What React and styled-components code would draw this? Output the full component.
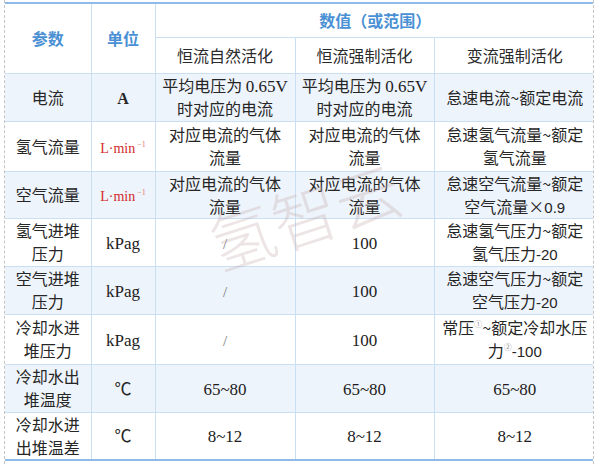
import React from "react";
import styled, { createGlobalStyle } from "styled-components";

const GlobalStyle = createGlobalStyle`
  html, body {
    margin: 0;
    padding: 0;
    background: #fff;
  }
  body {
    font-family: "Noto Sans CJK SC", "Noto Sans", sans-serif;
    color: #262626;
  }
`;

const Frame = styled.div`
  position: relative;
  width: 590px;
  height: 464px;
  margin-left: 4px;
  padding-top: 2px;
  box-sizing: border-box;
  border-left: 1px dashed #c4c4c4;
  border-right: 1px dashed #c4c4c4;
  overflow: hidden;
`;

const Sheet = styled.table`
  width: 590px;
  table-layout: fixed;
  border-collapse: collapse;
  border-top: 2px solid #8dbae6;
  border-bottom: 2px solid #8dbae6;
  font-size: 16px;
  line-height: 23px;
`;

const Row = styled.tr`
  height: ${(p) => p.$h}px;
  background: ${(p) => (p.$shade ? "#eef4fb" : "#fff")};
`;

const Cell = styled.td`
  border: 1px solid #cbdff3;
  padding: 0 3px;
  height: ${(p) => p.$h || 0}px;
  box-sizing: border-box;
  text-align: center;
  vertical-align: middle;
  white-space: nowrap;
  color: #262626;

  &:first-child {
    border-left: none;
  }
  &:last-child {
    border-right: none;
  }

  span, sup {
    line-height: 1;
  }
`;

const HeadCell = styled(Cell).attrs({ as: "th" })`
  color: #4a90d4;
  font-weight: 700;
  font-size: 16px;
`;

const SubHead = styled(Cell)`
  color: #2a2a2a;
`;

const Num = styled.span`
  font-family: "Liberation Serif", serif;
  font-size: 17px;
  color: #221c22;
`;

const Sans = styled.span`
  font-family: "Liberation Sans", sans-serif;
  font-size: 15px;
`;

const Slash = styled.span`
  font-family: "Liberation Serif", serif;
  font-size: 15px;
  color: #777;
`;

const Amp = styled.span`
  font-family: "Liberation Serif", serif;
  font-weight: 700;
  font-size: 16px;
`;

const Flow = styled.span`
  font-family: "Liberation Serif", serif;
  font-size: 14px;
  color: #d22a2a;

  sup {
    font-size: 8px;
    color: #e07a7a;
    vertical-align: 6px;
    margin-left: 2px;
  }
`;

const Deg = styled.span`
  font-size: 17px;
`;

const Note = styled.sup`
  font-size: 8px;
  color: #999;
  vertical-align: 7px;
`;

const Watermark = styled.div`
  position: absolute;
  left: 200px;
  top: 180px;
  font-size: 66px;
  line-height: 1;
  font-weight: 300;
  white-space: nowrap;
  color: rgba(190, 160, 160, 0.28);
  transform: rotate(-18deg);
  pointer-events: none;
`;

const rows = [
  {
    name: ["电流"],
    unit: "amp",
    a: ["平均电压为 ", <Num key="n">0.65V</Num>, <br key="b" />, "时对应的电流"],
    b: ["平均电压为 ", <Num key="n">0.65V</Num>, <br key="b" />, "时对应的电流"],
    c: ["怠速电流~额定电流"],
    h: 48,
    shade: true,
  },
  {
    name: ["氢气流量"],
    unit: "flow",
    a: ["对应电流的气体", <br key="b" />, "流量"],
    b: ["对应电流的气体", <br key="b" />, "流量"],
    c: ["怠速氢气流量~额定", <br key="b" />, "氢气流量"],
    h: 50,
  },
  {
    name: ["空气流量"],
    unit: "flow",
    a: ["对应电流的气体", <br key="b" />, "流量"],
    b: ["对应电流的气体", <br key="b" />, "流量"],
    c: ["怠速空气流量~额定", <br key="b" />, "空气流量×", <Sans key="s">0.9</Sans>],
    h: 47,
    shade: true,
  },
  {
    name: ["氢气进堆", <br key="b" />, "压力"],
    unit: "kPag",
    a: [<Slash key="s">/</Slash>],
    b: [<Num key="n">100</Num>],
    c: ["怠速氢气压力~额定", <br key="b" />, "氢气压力", <Sans key="s">-20</Sans>],
    h: 48,
  },
  {
    name: ["空气进堆", <br key="b" />, "压力"],
    unit: "kPag",
    a: [<Slash key="s">/</Slash>],
    b: [<Num key="n">100</Num>],
    c: ["怠速空气压力~额定", <br key="b" />, "空气压力", <Sans key="s">-20</Sans>],
    h: 48,
    shade: true,
  },
  {
    name: ["冷却水进", <br key="b" />, "堆压力"],
    unit: "kPag",
    a: [<Slash key="s">/</Slash>],
    b: [<Num key="n">100</Num>],
    c: [
      "常压",
      <Note key="n1">①</Note>,
      "~额定冷却水压",
      <br key="b" />,
      "力",
      <Note key="n2">②</Note>,
      <Sans key="s">-100</Sans>,
    ],
    h: 50,
  },
  {
    name: ["冷却水出", <br key="b" />, "堆温度"],
    unit: "deg",
    a: [<Num key="n">65~80</Num>],
    b: [<Num key="n">65~80</Num>],
    c: [<Num key="n">65~80</Num>],
    h: 48,
    shade: true,
  },
  {
    name: ["冷却水进", <br key="b" />, "出堆温差"],
    unit: "deg",
    a: [<Num key="n">8~12</Num>],
    b: [<Num key="n">8~12</Num>],
    c: [<Num key="n">8~12</Num>],
    h: 48,
  },
];

function UnitText({ kind }) {
  if (kind === "amp") return <Amp>A</Amp>;
  if (kind === "flow")
    return (
      <Flow>
        L·min<sup>−1</sup>
      </Flow>
    );
  if (kind === "kPag") return <Num>kPag</Num>;
  return <Deg>℃</Deg>;
}

export default function App() {
  return (
    <>
      <GlobalStyle />
      <Frame>
        <Sheet>
          <colgroup>
            <col style={{ width: 86 }} />
            <col style={{ width: 64 }} />
            <col style={{ width: 140 }} />
            <col style={{ width: 139 }} />
            <col style={{ width: 161 }} />
          </colgroup>
          <thead>
            <Row $h={34}>
              <HeadCell rowSpan={2}>参数</HeadCell>
              <HeadCell rowSpan={2}>单位</HeadCell>
              <HeadCell colSpan={3}>数值（或范围）</HeadCell>
            </Row>
            <Row $h={36}>
              <SubHead>恒流自然活化</SubHead>
              <SubHead>恒流强制活化</SubHead>
              <SubHead>变流强制活化</SubHead>
            </Row>
          </thead>
          <tbody>
            {rows.map((r, i) => (
              <Row key={i} $h={r.h} $shade={r.shade}>
                <Cell>{r.name}</Cell>
                <Cell>
                  <UnitText kind={r.unit} />
                </Cell>
                <Cell>{r.a}</Cell>
                <Cell>{r.b}</Cell>
                <Cell>{r.c}</Cell>
              </Row>
            ))}
          </tbody>
        </Sheet>
        <Watermark>氢智云</Watermark>
      </Frame>
    </>
  );
}
